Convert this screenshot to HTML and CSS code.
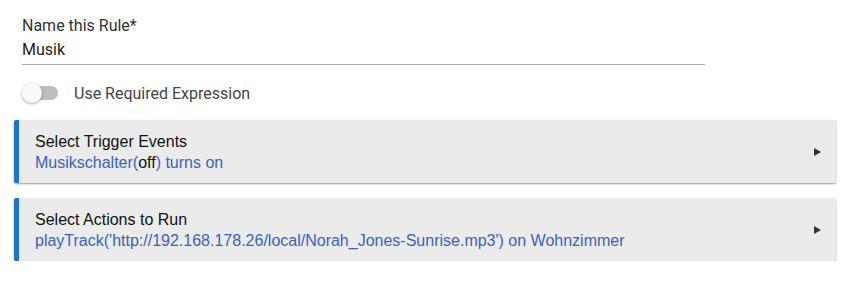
FILE: index.html
```html
<!DOCTYPE html>
<html>
  <head>
    <meta charset="UTF-8">
    <title>Rule</title>
    <link rel="stylesheet" href="styles.css">
  </head>
  <body>
    <div class="rule-form">
      <label class="field">
        <span class="field-label">Name this Rule*</span>
        <span class="field-input">Musik</span>
      </label>

      <div class="switch-row">
        <span class="switch">
          <span class="switch-track"></span>
          <span class="switch-thumb"></span>
        </span>
        <span class="switch-label">Use Required Expression</span>
      </div>

      <div class="panel">
        <div class="panel-text">
          <div class="panel-title">Select Trigger Events</div>
          <div class="panel-value">Musikschalter(<span class="state">off</span>) turns on</div>
        </div>
        <span class="panel-arrow"></span>
      </div>

      <div class="panel">
        <div class="panel-text">
          <div class="panel-title">Select Actions to Run</div>
          <div class="panel-value">playTrack('http://192.168.178.26/local/Norah_Jones-Sunrise.mp3') on Wohnzimmer</div>
        </div>
        <span class="panel-arrow"></span>
      </div>
    </div>
  </body>
</html>
```

FILE: styles.css
```css
html * {
  box-sizing: border-box;
}

body {
  margin: 0;
  background: #fff;
  font-family: Roboto, "Liberation Sans", sans-serif;
  color: rgba(0, 0, 0, 0.87);
}

.rule-form {
  padding: 14px 7px 0 14px;
}

.field {
  display: flex;
  flex-direction: column;
  width: 683px;
  margin-left: 8px;
  padding-bottom: 2px;
  border-bottom: 1px solid #a9a9a9;
  font-size: 16px;
  line-height: 24px;
  color: #333;
}

.field-input {
  color: #222;
}

.switch-row {
  display: flex;
  align-items: center;
  margin: 16px 0 0 8px;
  height: 24px;
}

.switch {
  position: relative;
  width: 36px;
  height: 20px;
}

.switch-track {
  position: absolute;
  left: 2px;
  top: 3px;
  width: 34px;
  height: 14px;
  border-radius: 7px;
  background: #bdbdbd;
}

.switch-thumb {
  position: absolute;
  left: 0;
  top: 0;
  width: 20px;
  height: 20px;
  border-radius: 50%;
  background: #fafafa;
  box-shadow: 0 1px 3px rgba(0, 0, 0, 0.35);
}

.switch-label {
  margin-left: 16px;
  font-size: 16px;
  color: #444;
}

.panel {
  display: flex;
  align-items: center;
  margin-top: 15px;
  height: 63px;
  padding: 0 15px 0 16px;
  background: #ebebeb;
  border-left: 5px solid #1976d2;
  border-radius: 2px;
  box-shadow: 0 1px 2px rgba(0, 0, 0, 0.4);
  font-family: "Liberation Sans", Arial, sans-serif;
  font-size: 16px;
  line-height: 21px;
}

.switch-row + .panel {
  margin-top: 15px;
}

.panel-text {
  flex: 1;
}

.panel-title {
  color: #111;
}

.panel-value {
  color: #3b5fc8;
}

.state {
  color: #111;
}

.panel-arrow {
  width: 0;
  height: 0;
  border-top: 4px solid transparent;
  border-bottom: 4px solid transparent;
  border-left: 7px solid #333;
}
```
